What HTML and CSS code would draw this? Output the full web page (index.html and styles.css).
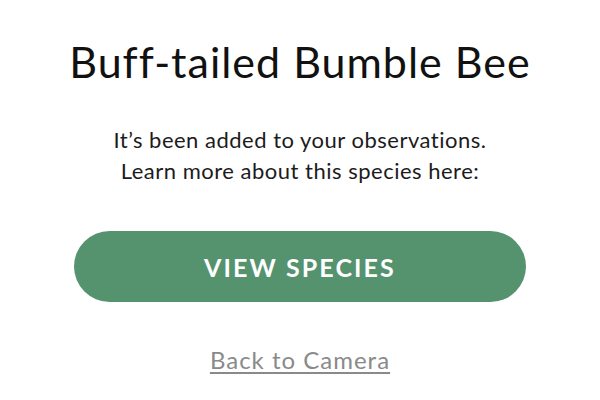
FILE: index.html
```html
<!DOCTYPE html>
<html lang="en">
<head>
<meta charset="utf-8">
<title>Buff-tailed Bumble Bee</title>
<link rel="stylesheet" href="styles.css">
</head>
<body>
<main class="screen">
  <h1 class="title">Buff-tailed Bumble Bee</h1>
  <p class="message">It’s been added to your observations.<br>Learn more about this species here:</p>
  <button class="primary" type="button">VIEW SPECIES</button>
  <a class="back" href="#">Back to Camera</a>
</main>
</body>
</html>
```

FILE: styles.css
```css
html, body {
  margin: 0;
  padding: 0;
  background: #ffffff;
}

body {
  font-family: Lato, "Open Sans", sans-serif;
  color: #111111;
  font-variant-ligatures: none;
}

.screen {
  display: flex;
  flex-direction: column;
  align-items: center;
  padding-top: 36px;
}

.title {
  margin: 0;
  font-size: 43px;
  line-height: 52px;
  font-weight: 400;
  letter-spacing: 1px;
  color: #111111;
}

.message {
  margin: 36px 0 0;
  font-size: 22px;
  line-height: 31px;
  letter-spacing: 0.5px;
  text-align: center;
  color: #1c1c1c;
}

.primary {
  margin-top: 45px;
  width: 452px;
  height: 71px;
  border: none;
  border-radius: 36px;
  background: #55936f;
  color: #ffffff;
  font-family: Lato, "Open Sans", sans-serif;
  font-weight: 700;
  font-size: 25px;
  letter-spacing: 2.1px;
  padding: 0;
}

.back {
  margin-top: 44px;
  font-size: 24px;
  line-height: 28px;
  letter-spacing: 1px;
  color: #8a8a8a;
  text-decoration: underline;
  text-underline-offset: 3px;
}
```
